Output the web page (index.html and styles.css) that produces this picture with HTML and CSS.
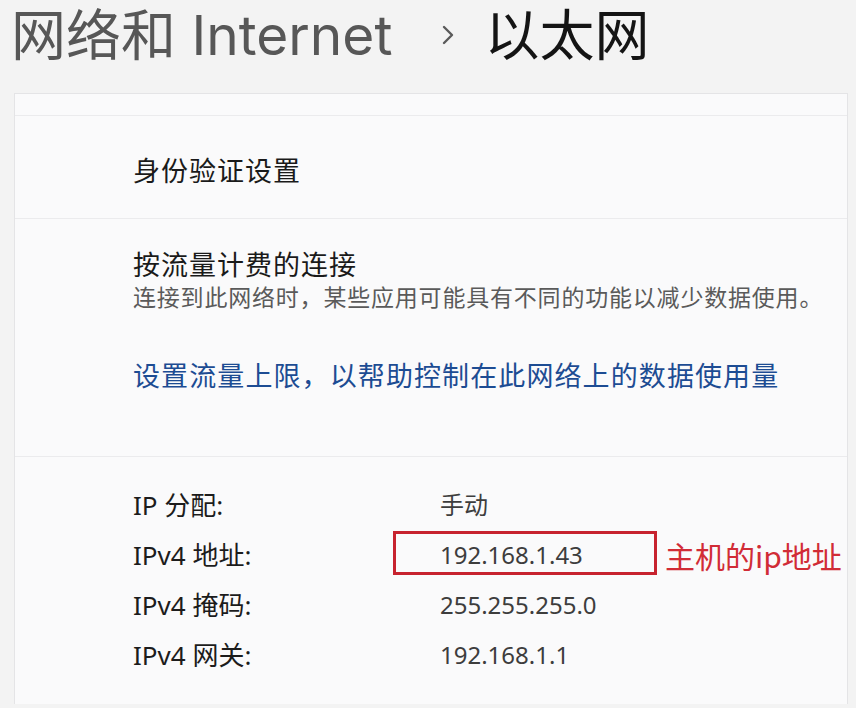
FILE: index.html
```html
<!DOCTYPE html>
<html lang="zh-CN">
<head>
<meta charset="utf-8">
<title>以太网</title>
<link rel="stylesheet" href="styles.css">
</head>
<body>
<header class="crumbs">
  <span class="crumb-parent">网络和 Internet</span>
  <svg class="chevron" viewBox="0 0 14 20" width="14" height="20" aria-hidden="true"><path d="M3 2 L11 10 L3 18" fill="none" stroke="#5a5a5a" stroke-width="2.4" stroke-linecap="round" stroke-linejoin="round"/></svg>
  <span class="crumb-current">以太网</span>
</header>
<main class="card">
  <div class="row row-strip"></div>
  <div class="row row-auth">
    <div class="row-title">身份验证设置</div>
  </div>
  <div class="row row-metered">
    <div class="row-title">按流量计费的连接</div>
    <div class="row-desc">连接到此网络时，某些应用可能具有不同的功能以减少数据使用。</div>
    <a class="row-link" href="#">设置流量上限，以帮助控制在此网络上的数据使用量</a>
  </div>
  <div class="row row-props">
    <dl class="props">
      <dt>IP 分配:</dt><dd>手动</dd>
      <dt>IPv4 地址:</dt><dd class="highlighted">192.168.1.43<span class="mark-box"></span><span class="mark-note">主机的ip地址</span></dd>
      <dt>IPv4 掩码:</dt><dd>255.255.255.0</dd>
      <dt>IPv4 网关:</dt><dd>192.168.1.1</dd>
    </dl>
  </div>
</main>
</body>
</html>
```
FILE: styles.css
```css
html, body {
  margin: 0;
  padding: 0;
}
body {
  background: #f3f3f3;
  font-family: "Noto Sans", "Noto Sans CJK SC", sans-serif;
  color: #1b1b1b;
  width: 856px;
  height: 708px;
  overflow: hidden;
}
.crumbs {
  display: flex;
  align-items: center;
  height: 67px;
  padding-top: 2px;
  padding-left: 11px;
  font-family: Inter, "Noto Sans CJK SC", sans-serif;
  font-size: 55px;
  line-height: 67px;
  white-space: nowrap;
}
.crumb-parent {
  color: #575757;
}
.chevron {
  margin: 0 29px 0 49px;
  position: relative;
  top: -1px;
}
.crumb-current {
  color: #141414;
}
.card {
  margin: 24px 0 0 14px;
  width: 834px;
  background: #fafafb;
  border: 1px solid #e4e4e6;
  border-bottom: none;
  box-sizing: border-box;
  display: flex;
  flex-direction: column;
}
.row {
  border-bottom: 1px solid #ebebed;
  padding-left: 118px;
}
.row-strip {
  height: 21px;
}
.row-auth {
  height: 102px;
  display: flex;
  align-items: center;
}
.row-title {
  font-family: Inter, "Noto Sans CJK SC", sans-serif;
  font-size: 27px;
  letter-spacing: 1px;
  line-height: 33px;
  color: #1a1a1a;
}
.row-auth .row-title {
  position: relative;
  top: 4px;
}
.row-metered {
  height: 238px;
  padding-top: 30px;
  box-sizing: border-box;
  display: flex;
  flex-direction: column;
  align-items: flex-start;
}
.row-desc {
  margin-top: 2px;
  font-family: Inter, "Noto Sans CJK SC", sans-serif;
  font-size: 23px;
  letter-spacing: 0.8px;
  line-height: 28px;
  color: #5a5a5a;
}
.row-link {
  margin-top: 48px;
  font-family: Inter, "Noto Sans CJK SC", sans-serif;
  font-size: 27px;
  letter-spacing: 1.1px;
  line-height: 33px;
  color: #1d4c93;
  text-decoration: none;
}
.row-props {
  padding-top: 23px;
  padding-bottom: 24px;
  border-bottom: none;
}
.props {
  margin: 0;
  display: grid;
  grid-template-columns: 307px 1fr;
  grid-auto-rows: 50px;
  align-items: center;
  font-size: 26px;
  line-height: 50px;
}
.props dt {
  color: #1c1c1c;
}
.props dd {
  margin: 0;
  color: #3d3d3d;
  font-size: 24px;
}
.highlighted {
  position: relative;
}
.mark-box {
  position: absolute;
  left: -47px;
  top: 1px;
  width: 264px;
  height: 44px;
  border: 3px solid #c7232f;
  box-sizing: border-box;
}
.mark-note {
  position: absolute;
  left: 225px;
  top: 0;
  font-family: "Noto Sans CJK SC", sans-serif;
  font-size: 30px;
  line-height: 50px;
  color: #d12c36;
  white-space: nowrap;
}
```
